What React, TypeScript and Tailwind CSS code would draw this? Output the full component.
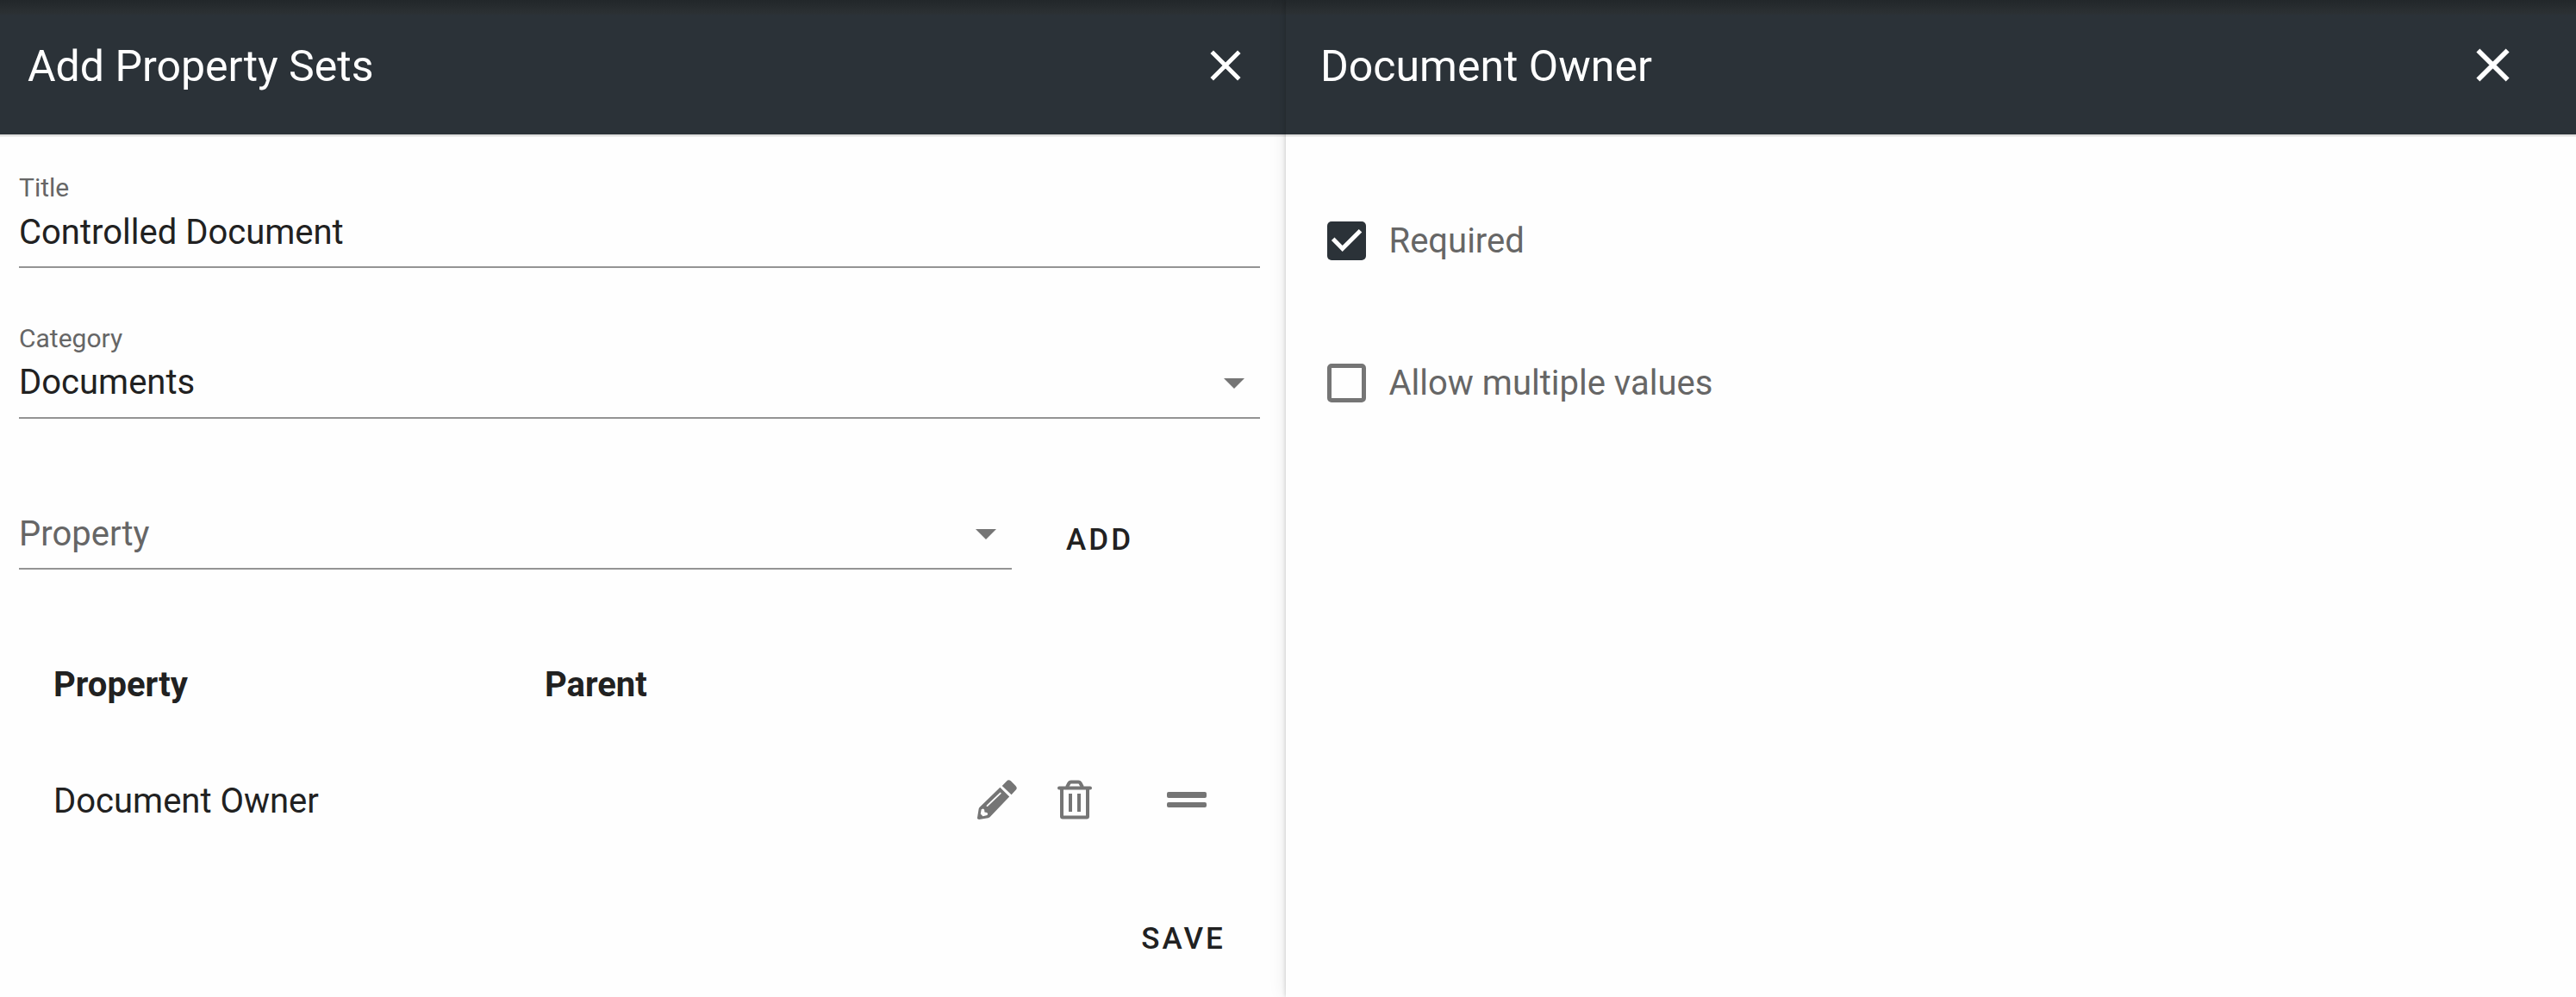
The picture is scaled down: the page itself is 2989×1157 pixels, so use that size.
import React from "react";

function CloseIcon({ className, strokeWidth }: { className: string; strokeWidth: number }) {
  return (
    <svg viewBox="0 0 36 36" className={className} aria-hidden="true">
      <path d="M2.2 2.2 33.8 33.8M33.8 2.2 2.2 33.8" fill="none" stroke="#fff" strokeWidth={strokeWidth} />
    </svg>
  );
}

function Caret() {
  return (
    <svg viewBox="0 0 24 12" className="h-3 w-6" aria-hidden="true">
      <path d="M0 0h24L12 12z" fill="#757575" />
    </svg>
  );
}

function PencilIcon() {
  return (
    <svg viewBox="104 76 136 136" className="mb-[2px] h-[46px] w-[46px]" aria-hidden="true">
      <path fill="#757575" d="M189 97 204 81Q211 73 219 80L235 96Q243 104 236 111L221 127Z" />
      <path fill="#757575" d="M182 102 214 134 147 204Q145 206 141 207L110 212Q103 212 104 206L109 175Q110 172 112 170Z" />
      <path d="M138 165 183 122" stroke="#fff" strokeWidth="5.500" strokeLinecap="round" />
      <path fill="#fff" d="M118 177 124 175 128 178 129 187 137 188 140 192 138 197 123 201 115 193Z" />
    </svg>
  );
}

function TrashIcon() {
  return (
    <svg viewBox="0 0 40 46" className="mb-[2px] h-[46px] w-10" aria-hidden="true" fill="none" stroke="#757575">
      <path d="M2 9.500h36" strokeWidth="4" strokeLinecap="round" />
      <path d="M11 8.500 13.200 4.300Q14 2.500 15.800 2.500h8.400Q26 2.500 26.800 4.300L29 8.500" strokeWidth="4" />
      <path d="M5 10v32.500q0 1 1 1h28q1 0 1-1V10" strokeWidth="4" />
      <path d="M15 16v21M25 16v21" strokeWidth="4" />
    </svg>
  );
}

function Header({ title, children }: { title: string; children: React.ReactNode }) {
  return (
    <header className="h-[159px] shrink-0 border-b border-[#f0f0f0]">
      <div className="flex h-[158px] items-center justify-between border-b-2 border-[#e0e0e0] bg-[#2b3238] bg-linear-to-b from-[#22272a] via-[#2b3033] via-[15px] to-[#2b3238] to-[18px] pb-[2px] text-[50px] leading-[64px] text-white">
        {title}
        {children}
      </div>
    </header>
  );
}

export default function App() {
  return (
    <main className="flex h-[1157px] w-[2989px] overflow-hidden bg-[#fefefe] font-['Roboto',sans-serif] text-[40px] leading-[48px] text-[#212121]">
      <section className="flex w-[1492px] shrink-0 flex-col">
        <div className="[&_header>div]:pr-[52px] [&_header>div]:pl-8">
          <Header title="Add Property Sets">
            <CloseIcon className="mb-[2px] h-9 w-9" strokeWidth={5} />
          </Header>
        </div>
        <div className="flex flex-col pl-[22px]">
          <div className="mt-[40px] h-[112px] w-[1440px] border-b-2 border-[#949494] pt-px">
            <div className="h-[46px] text-[30px] leading-[36px] text-[#666]">Title</div>
            <div>Controlled Document</div>
          </div>
          <div className="mt-[63px] h-[112px] w-[1440px] border-b-2 border-[#949494] pt-px">
            <div className="h-[45px] text-[30px] leading-[36px] text-[#666]">Category</div>
            <div className="flex items-start justify-between pr-[18px]">
              <span>Documents</span>
              <span className="mt-[19px]">
                <Caret />
              </span>
            </div>
          </div>
          <div className="mt-[109px] flex h-[66px]">
            <div className="flex w-[1152px] items-start justify-between border-b-2 border-[#949494] pr-[18px] text-[#666]">
              <span className="mt-px">Property</span>
              <span className="mt-[19px]">
                <Caret />
              </span>
            </div>
            <button className="mt-[12px] ml-[63px] h-10 text-[35px] leading-[40px] font-medium tracking-[3.125px]">ADD</button>
          </div>
          <div className="mt-[110px] flex pl-10 font-bold">
            <div className="w-[570px]">Property</div>
            <div>Parent</div>
          </div>
          <div className="mt-[86px] flex h-12 items-center pl-10">
            <div className="w-[1072px] pt-[2px]">Document Owner</div>
            <PencilIcon />
            <div className="ml-[47px]">
              <TrashIcon />
            </div>
            <div className="mb-[2px] ml-[87px] flex flex-col gap-[5px]">
              <div className="h-[6.5px] w-[46px] rounded-xs bg-[#757575]" />
              <div className="h-[6.5px] w-[46px] rounded-xs bg-[#757575]" />
            </div>
          </div>
          <div className="mt-[117px] flex justify-end pr-[70px]">
            <button className="h-10 text-[35px] leading-[40px] font-medium tracking-[3.125px]">SAVE</button>
          </div>
        </div>
      </section>
      <section className="flex grow flex-col bg-[#fefefe] shadow-[0_0_5px_rgba(0,0,0,0.2),0_0_20px_rgba(0,0,0,0.09)]">
        <div className="[&_header>div]:pr-[77px] [&_header>div]:pl-10">
          <Header title="Document Owner">
            <CloseIcon className="mb-[3px] h-[39px] w-[39px]" strokeWidth={5.2} />
          </Header>
        </div>
        <div className="flex flex-col gap-[117px] pt-[97px] pl-[47.5px] text-[#666]">
          <label className="flex h-12 items-center gap-[27px]">
            <span className="mb-[2px] flex h-[45px] w-[45px] items-center justify-center rounded-[5px] bg-[#2b3238]">
              <svg viewBox="0 0 45 45" className="h-[45px] w-[45px]" aria-hidden="true">
                <path d="M6.700 20.300 17.700 31.500 38.500 10.700" fill="none" stroke="#fff" strokeWidth="5" />
              </svg>
            </span>
            Required
          </label>
          <label className="flex h-12 items-center gap-[27px]">
            <span className="mb-[2px] h-[45px] w-[45px] rounded-[5px] border-[5px] border-[#757575]" />
            Allow multiple values
          </label>
        </div>
      </section>
    </main>
  );
}
